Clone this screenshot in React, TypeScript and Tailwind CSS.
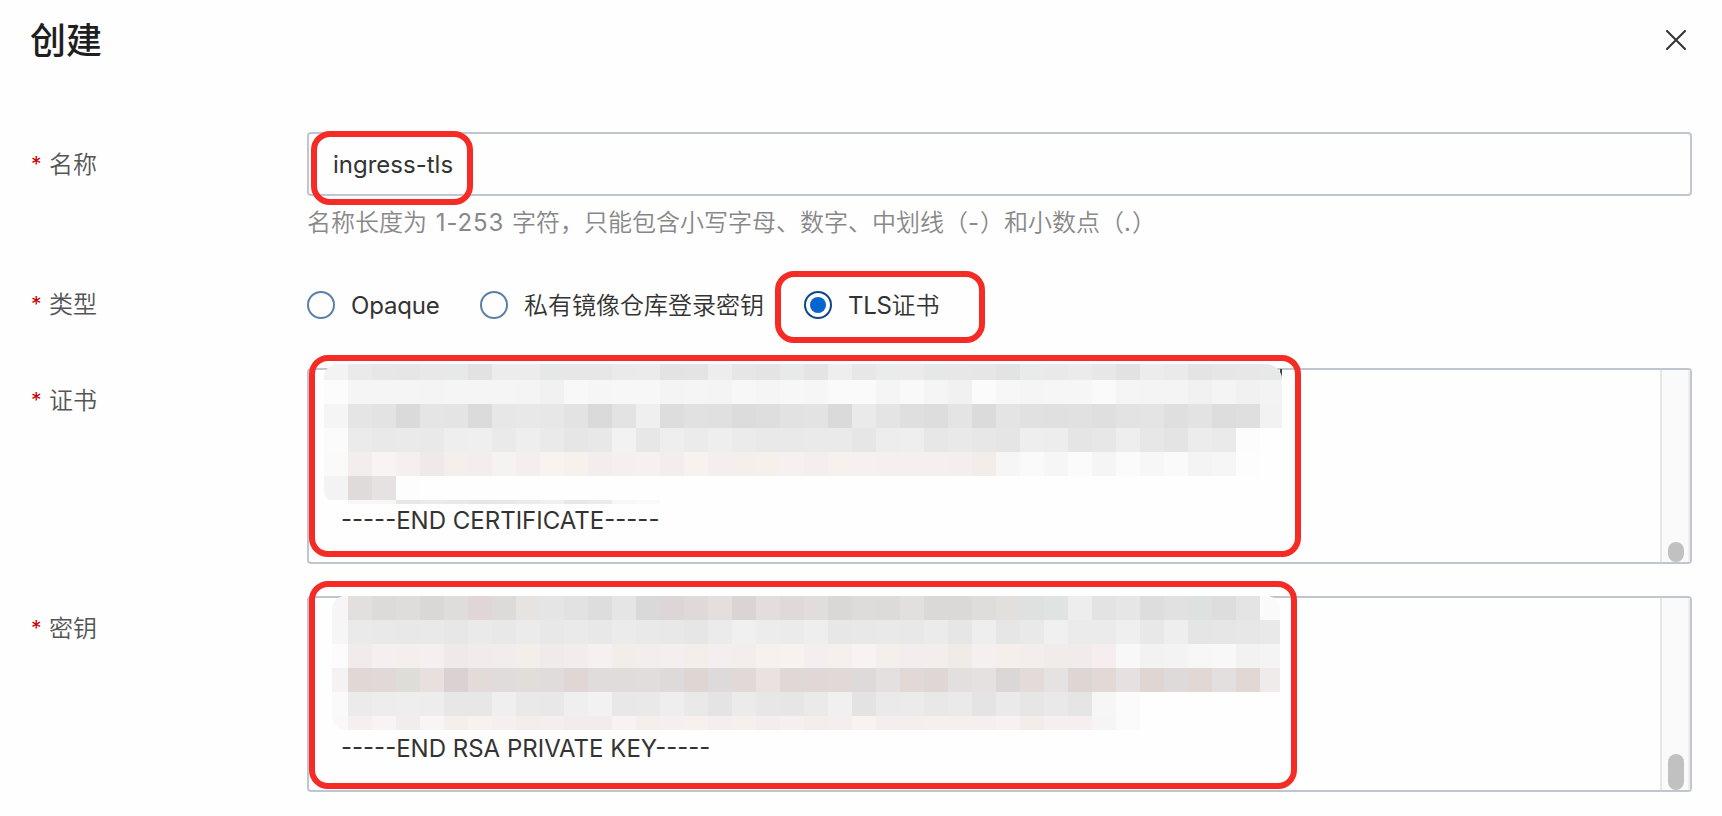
import type { ReactNode } from 'react'
import clsx from 'clsx'

// One hex colour per 24px mosaic cell, forty cells to a row
const certRows = [
  'f3f3f3 e9eae9 e7e7e7 e6e6e6 e7e8e7 e6e9e8 e2e2e2 ececec ececec e5e8e7 e7e7e7 e7e7e7 eaeaea ebebeb e3e3e3 e4e4e4 ededed e6e6e6 e4e4e4 e7eae9 e4e4e4 eeeeee e7e7e7 e9ecea ebebeb e5e8e6 e7e7e7 e6e6e6 e1e4e2 e8ebe9 e9e9e9 ebebeb e7e7e7 e2e2e2 ececec eaeaea e4e4e4 e6e6e6 e7e7e7 e6e9e7',
  'fcfcfc f4f5f4 f5f5f5 f4f5f4 f4f4f4 f5f5f5 f5f5f5 f5f5f5 f4f4f4 f0f1f0 f8f8f8 f6f6f6 f7f7f7 f7f7f7 f4f4f4 f5f5f5 f4f4f4 f7f7f7 f5f5f5 f7f7f7 f5f6f5 fafafa fafafa f4f5f4 f9f9f9 f4f5f4 f1f1f1 fbfbfb f7f7f7 f5f5f5 f6f6f6 f6f6f6 fafafa f5f5f5 f4f4f4 f4f4f4 f1f1f1 f4f4f4 f1f1f1 f3f3f3',
  'f5f5f5 e5e5e5 e3e3e3 dadada e5e5e5 e4e4e4 dbdbdb e7e7e7 e8e8e8 e7e7e7 e3e3e3 dadada e3e3e3 efefef dddddd e1e1e1 e0e0e0 dcdcdc dedede e2e2e2 e3e3e3 dadada eaeaea e4e4e4 dfdfdf dddddd e4e4e4 dbdbdb e4e4e4 e1e1e1 e0e0e0 e1e1e1 dfdfdf e3e3e3 e4e4e4 dfdfdf e3e3e3 dddddd dfdfdf f2f2f2',
  'fbfbfb ebebeb e9e9e9 eaeaea e9e9e9 eeeeee efefef eaeaea eeeeee eaeaea e6e6e6 e8e8e8 f2f2f2 e7e7e7 eeeeee ebebeb eeeeee ebebeb e9e9e9 e9e9e9 eaeaea eaeaea e6e6e6 ededed eeeeee e7e7e7 e9e9e9 e7e7e7 e5e5e5 eeeeee ededed e5e5e5 e7e7e7 eeeeee e7e7e7 e4e4e4 ececec eaeaea fcfcfc fefefe',
  'fbfaf8 f3eded f9f3f3 f6efef efe9e9 f5efeb f3eeed f7f2f2 f4eeee f8f3ee f6f1ed f3eded f5efef f7f0f0 f3eded f7f2ed f5eeee f4efeb f6f0ec f7f0f0 f4eeee f6f1ec f7f0f0 f5efef f5efef f5efef f5eeee f3edea f6f6f6 fafafa f6f6f6 fbfbfb f5f5f5 fbfbfb f7f7f7 fafafa f4f4f4 f6f6f6 fdfdfd fefefe',
  'f4f3f4 e0dbdb e6e2e1 fdfdfd',
  'fefefe f7f7f7 f7f7f7 e7e7e7 ebebeb e9e9e9 e6e6e6 e7e7e7 ebebeb f0f0f0 e7e7e7 ebebeb f7f7f7 f9f9f9',
]

const keyRows = [
  'f7f5f6 e4dfdf dfdada e1dcdc dcd7d7 e0dcdc e1d6d7 dedad9 e6e3e1 e5e5e5 e1e2e1 dcdddc e5e5e5 d8d9d8 dcd6d6 dfdad9 e2dfdd dad4d4 e3dede dfd9d9 e2dddd dcd7d7 e0dbdb dedad9 e4dfdf dcd8d7 dcd8d7 e1dcdc e2dfdd dfe1e0 dfe3e1 ededed e3e3e3 e6e6e6 dddddd e0e1e0 dee2df dddddd e4e4e4 fafafa',
  'f6f6f6 eaeaea e9e9e9 e8e8e8 e9e9e9 e7e7e7 eaeaea e8e8e8 ebebeb e8e8e8 eaeaea e8e8e8 ebebeb e9e9e9 e8e8e8 e6e6e6 ebebeb f0f0f0 ececec ebebeb eeeeee e7e7e7 e8e8e8 e9e9e9 e8e8e8 ebebeb e6e6e6 eeeeee e6e6e6 e9e9e9 f0f0f0 ebebeb ebebeb efefef e8e8e8 eeeeee e5e5e5 e6e6e6 e7e7e7 e9e9e9',
  'fdfbfc f1ebeb f5efef f4eeed f6efef efe9e9 f1ebeb f2edec f4eeeb f0eaea f2ecec f6f0f0 f3edea f3edec f4eeee f4eeeb f4eeee f3edec f7f1ed f7f2ee f4eeee f6f0ec f8f2f2 f5efeb f3eded f3edec f0ebe7 f6efef f6eeeb f3edec f1ebea f2ebeb f6eeee f8f8f8 f2f2f2 f3f3f3 f7f7f7 f8f8f8 f2f2f2 f4f4f4',
  'f4f2f3 e1d8d6 e1d8d7 dfddd8 e7e0de dad2d2 e3dbd9 e0dcdb e1dddb e1dcdc e1d6d5 e0dcdb e1dcdc e2dddd dedad9 dfd6d3 dedad9 e1d8d8 eae1e1 e0d7d7 e1d7d7 e2d8d8 dedad9 e4e0df e2d9d7 dfd6d6 e4dfdf e5e1e0 dbd7d6 e3dbd9 e6e2e1 ded6d3 e2d8d6 e7e0e0 dfd5d3 dfdada e1d8d6 e4dfdf e1d8d6 efebea',
  'fafafa ebebeb ededed eeeeee ededed e7e7e7 e7e7e7 efefef e9e9e9 e8e8e8 efefef f2f2f2 e8e8e8 e9e9e9 eeeeee e9e9e9 e4e4e4 ebebeb e7e7e7 e6e6e6 eaeaea f0f0f0 e3e3e3 eaeaea ebebeb e8e8e8 eaeaea e4e4e4 eaeaea e6e6e6 e9e9e9 e5e5e5 f6f6f6 fbfbfb fefefe',
  'faf8f9 f5efef f9f3f3 f2eded f9f5f4 f4efeb f7f2ed f5efef f4eeeb f4efee f2ecec f2ecec f8f2f2 f5efec f5efef f7f0ed f4efee f6f0ec f3eded f5efef f4eeea f4eeee f9f3ef f4eeee f4eeed f5efed f6f0ec f6efef f8f1f1 f2ede8 f5efef f7efef f5f5f5 fbfbfb',
]

function Mosaic({ rows, className }: { rows: string[]; className: string }) {
  return (
    <div className={clsx('absolute flex flex-col overflow-hidden bg-[#fefefe]', className)}>
      {rows.map((row, r) => (
        <div key={r} className="flex h-6 shrink-0">
          {row.split(' ').map((color, c) => (
            <span key={c} className="w-6 shrink-0" style={{ backgroundColor: `#${color}` }} />
          ))}
        </div>
      ))}
    </div>
  )
}

function Highlight({ className }: { className: string }) {
  return <div className={clsx('absolute rounded-[19px] border-6 border-[#f42c25]', className)} />
}

function Field({ label, className, children }: { label: string; className: string; children: ReactNode }) {
  return (
    <div className={clsx('flex', className)}>
      <div className="flex h-[66px] w-[276px] shrink-0 items-center text-[#555]">
        <span className="w-[18px] text-[21px] font-normal text-[#c80000]">*</span>
        <span>{label}</span>
      </div>
      <div className="relative flex-1">{children}</div>
    </div>
  )
}

function Radio({ checked, className, children }: { checked?: boolean; className?: string; children: ReactNode }) {
  return (
    <label className={clsx('flex items-center gap-4', className)}>
      <span
        className={clsx(
          'flex size-7 items-center justify-center rounded-full border-2',
          checked ? 'border-[#0f4589]' : 'border-[#5a7fa8]',
        )}
      >
        {checked && <span className="size-4 rounded-full bg-[#0864cf]" />}
      </span>
      <span className="pt-0.5 whitespace-nowrap">{children}</span>
    </label>
  )
}

function TextBox({ text, thumb }: { text: string; thumb: string }) {
  return (
    <div className="flex h-49 rounded-[4px] border-2 border-[#c0c6cf]">
      <div className="flex flex-1 items-end pb-[25px] pl-8">
        <span className="leading-8 font-normal whitespace-nowrap">{text}</span>
      </div>
      <div className="flex w-[30px] items-end border-x-2 border-l-[#e6e6e6] border-r-[#eeeeee] bg-[#fafafa] pl-1.5">
        <div className={clsx('w-4 rounded-full bg-[#c1c1c1]', thumb)} />
      </div>
    </div>
  )
}

export default function App() {
  return (
    <div className="h-[816px] w-[1722px] overflow-hidden bg-[#fefefe] pr-[30px] pl-[31px] font-['Inter','Noto_Sans_CJK_SC',sans-serif] text-2xl font-[360] text-[#333]">
      <header className="flex h-20 items-center justify-between">
        <h1 className="-ml-px pt-0.5 text-[36px] font-medium text-[#1f1f1f]">创建</h1>
        <button aria-label="关闭" className="mr-1.5">
          <svg width="20" height="20" viewBox="0 0 20 20" fill="none" stroke="#333" strokeWidth="2" strokeLinecap="round">
            <path d="M1 1 19 19M19 1 1 19" />
          </svg>
        </button>
      </header>

      <Field label="名称" className="mt-[52px] h-[140px]">
        <div className="flex h-16 items-center rounded-[4px] border-2 border-[#c0c6cf] pt-0.5 pl-6">
          <span className="font-normal">ingress-tls</span>
        </div>
        <p className="mt-[11px] leading-8 whitespace-nowrap text-[#888]">
          <span className="mr-0.5">名称长度为 </span>
          <span className="font-normal tracking-[0.9px]">1-253 </span>
          <span>字符，只能包含小写字母、数字、中划线（</span>
          <span className="font-normal tracking-[1px]">-</span>
          <span>）和小数点（</span>
          <span className="font-normal tracking-[1px]">.</span>
          <span>）</span>
        </p>
        <Highlight className="-top-px left-1 h-[74px] w-[162px]" />
      </Field>

      <Field label="类型" className="h-24">
        <div className="flex h-[66px] items-center">
          <Radio className="w-[173px]">
            <span className="font-normal tracking-[-0.2px]">Opaque</span>
          </Radio>
          <Radio className="w-[324px]">私有镜像仓库登录密钥</Radio>
          <Radio checked>
            <span className="font-normal tracking-[-0.3px]">TLS</span>证书
          </Radio>
        </div>
        <Highlight className="-top-px left-[468px] h-[72px] w-[210px]" />
      </Field>

      <Field label="证书" className="h-57">
        <TextBox text="-----END CERTIFICATE-----" thumb="h-5" />
        <span className="absolute top-px left-[973px] h-2.5 w-0.5 bg-[#444]" />
        <Mosaic
          rows={certRows}
          className="-top-1 left-[17px] h-[140px] w-[958px] rounded-tl-[14px] rounded-tr-[16px] rounded-bl-[14px] [&>div:first-child]:h-4"
        />
        <Highlight className="top-[-13px] left-0.5 h-[202px] w-[992px]" />
      </Field>

      <Field label="密钥" className="h-49">
        <TextBox text="-----END RSA PRIVATE KEY-----" thumb="h-9" />
        <Mosaic
          rows={keyRows}
          className="top-0 left-[25px] h-[134px] w-[948px] rounded-[14px] [&>div>span:first-child]:w-4"
        />
        <Highlight className="top-[-15px] left-0.5 h-[208px] w-[988px]" />
      </Field>
    </div>
  )
}
